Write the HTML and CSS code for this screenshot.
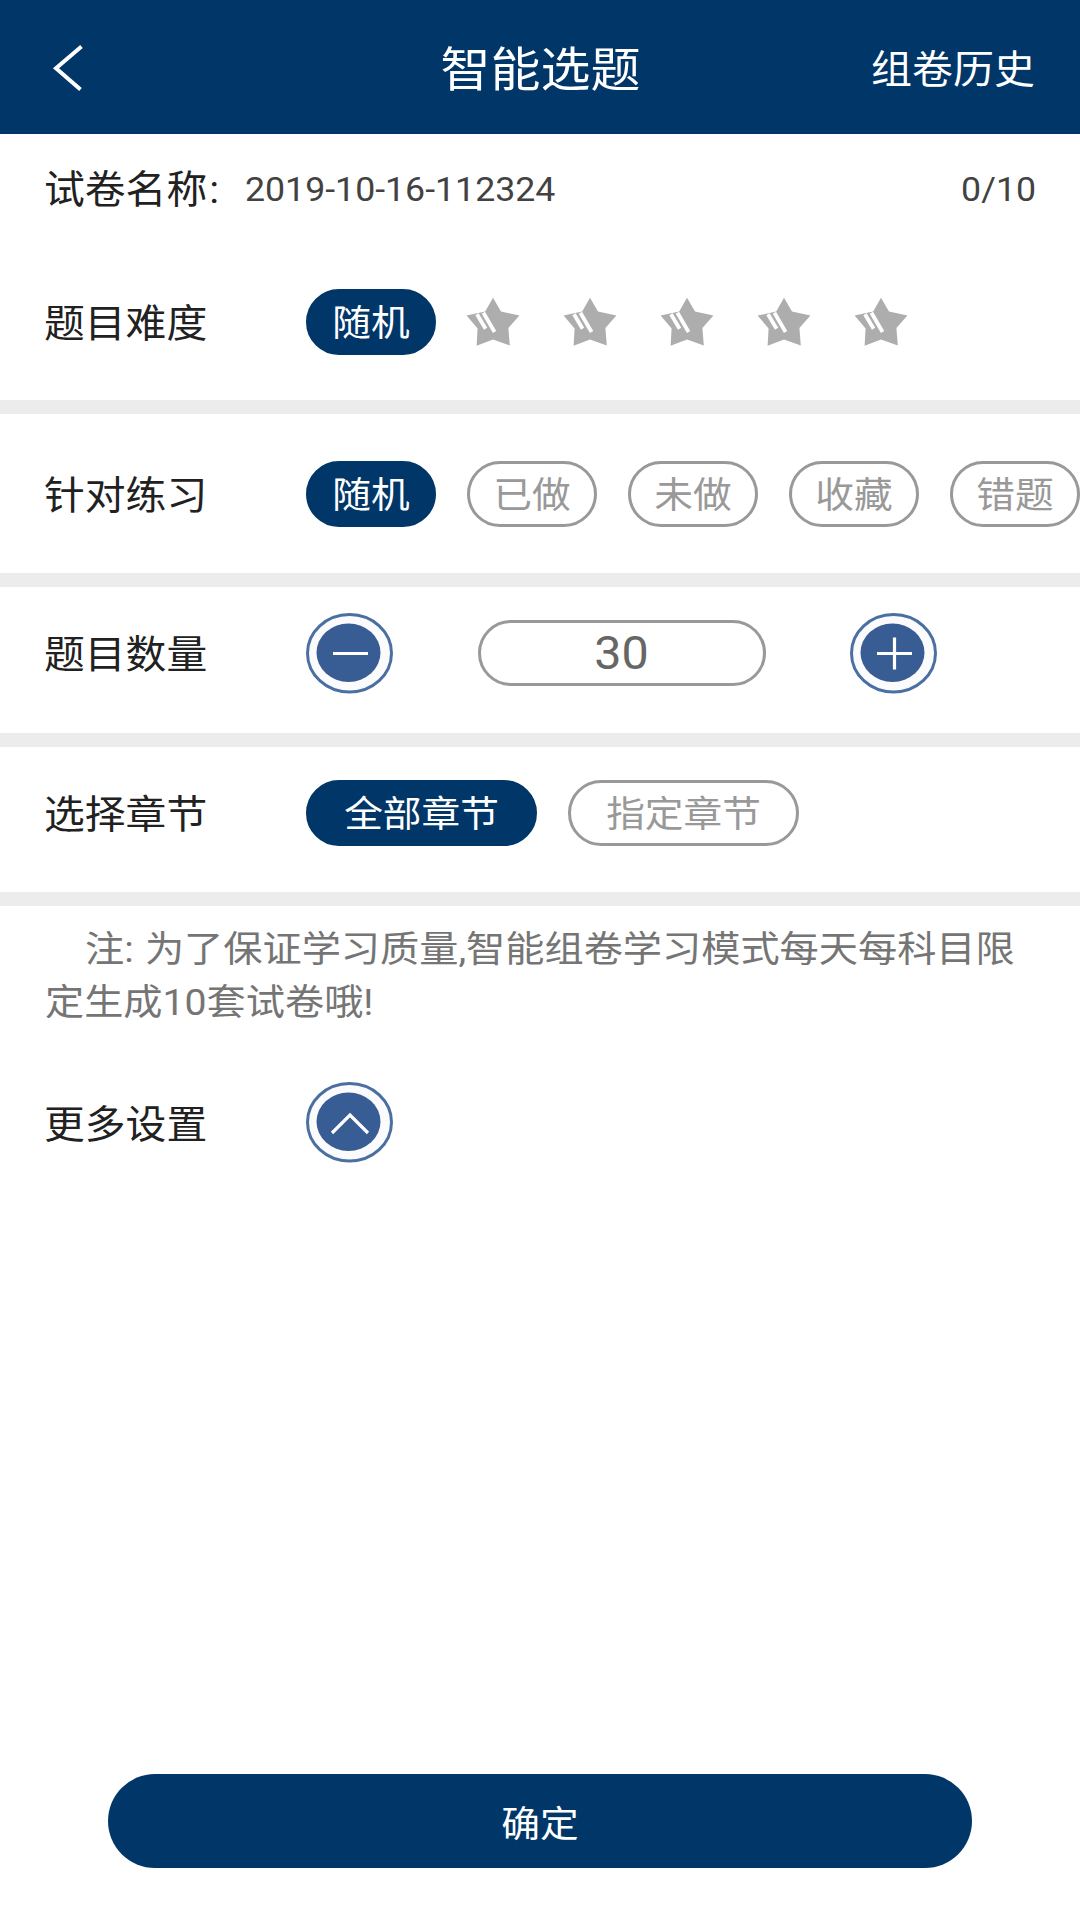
FILE: index.html
```html
<!DOCTYPE html>
<html lang="zh-CN">
<head>
<meta charset="utf-8">
<title>智能选题</title>
<link rel="stylesheet" href="styles.css">
</head>
<body>
<svg class="defs" width="0" height="0" aria-hidden="true">
  <symbol id="star" viewBox="0 0 54 50">
    <path fill="#adadad" d="M27 .8 35 14.6 53.4 18.6 42.4 31 43.8 48.6 27 42.4 10.6 48.8 11.6 31.4.6 18.6 19.2 14.6Z"/>
    <path fill="none" stroke="#fff" stroke-width="3.8" d="M11 17.2 19.6 31.8M17.4 15.8 28.6 35"/>
  </symbol>
  <symbol id="ring" viewBox="0 0 87 81">
    <ellipse cx="43.5" cy="40.2" rx="42" ry="38.7" fill="#fbfbfe" stroke="#4a6fa1" stroke-width="3"/>
    <ellipse cx="42.5" cy="39.7" rx="32" ry="29.2" fill="#385d94" stroke="none"/>
  </symbol>
</svg>
<div class="screen">
  <header class="bar">
    <svg class="back" viewBox="0 0 40 50"><path d="M35.500 3.500 10 25.200 34.500 46.500"/></svg>
    <h1 class="title text">智能选题</h1>
    <a class="history text">组卷历史</a>
  </header>
  <main class="form">
    <div class="row name">
      <span class="label text">试卷名称<span class="colon">:</span></span>
      <span class="value text">2019-10-16-112324</span>
      <span class="count text">0/10</span>
    </div>
    <div class="row level">
      <span class="label text">题目难度</span>
      <span class="chip on"><span class="text">随机</span></span>
      <div class="stars">
        <svg><use href="#star"/></svg>
        <svg><use href="#star"/></svg>
        <svg><use href="#star"/></svg>
        <svg><use href="#star"/></svg>
        <svg><use href="#star"/></svg>
      </div>
    </div>
    <div class="row practice">
      <span class="label text">针对练习</span>
      <div class="chips">
        <span class="chip on"><span class="text">随机</span></span>
        <span class="chip"><span class="text">已做</span></span>
        <span class="chip"><span class="text">未做</span></span>
        <span class="chip"><span class="text">收藏</span></span>
        <span class="chip"><span class="text">错题</span></span>
      </div>
    </div>
    <div class="row amount">
      <span class="label text">题目数量</span>
      <div class="stepper">
        <svg class="round" viewBox="0 0 87 81"><use href="#ring"/><path d="M27 40.500H62"/></svg>
        <span class="number"><span class="digits text">30</span></span>
        <svg class="round" viewBox="0 0 87 81"><use href="#ring"/><path d="M27 40.500H62M44.500 24.500V56.500"/></svg>
      </div>
    </div>
    <div class="row chapter">
      <span class="label text">选择章节</span>
      <div class="chips">
        <span class="chip wide on"><span class="text">全部章节</span></span>
        <span class="chip wide"><span class="text">指定章节</span></span>
      </div>
    </div>
    <p class="note"><span class="text">注: 为了保证学习质量,智能组卷学习模式每天每科目限</span><span class="text">定生成10套试卷哦!</span></p>
    <div class="row more">
      <span class="label text">更多设置</span>
      <svg class="round" viewBox="0 0 87 81"><use href="#ring"/><path d="M26 51 44 33 62 51"/></svg>
    </div>
  </main>
  <footer class="foot"><button class="submit"><span class="text">确定</span></button></footer>
</div>
</body>
</html>
```
FILE: styles.css
```css
* { box-sizing: border-box; }

body {
  margin: 0;
  background: #fff;
  color: #212121;
  font-family: Roboto, "Noto Sans CJK SC", sans-serif;
}

.defs { display: block; }

.screen {
  display: flex;
  flex-direction: column;
  width: 1080px;
  height: 1920px;
  overflow: hidden;
}

/* slightly extended letterforms */
.text {
  display: block;
  transform: translateY(2px) scaleY(.94);
}

.bar {
  display: grid;
  grid-template-columns: 1fr auto 1fr;
  align-items: center;
  height: 134px;
  padding: 2px 45px 0 46px;
  background: #003668;
  color: #fff;
}

.back {
  width: 40px;
  height: 50px;
  fill: none;
  stroke: #fff;
  stroke-width: 4;
}

.title {
  margin: 0;
  font-size: 50px;
  font-weight: 400;
  line-height: 60px;
}

.history {
  justify-self: end;
  font-size: 41px;
  line-height: 60px;
}

.form { flex: 1; }

.row {
  display: flex;
  align-items: center;
}

.label {
  width: 262px;
  margin-left: 44px;
  flex: none;
  font-size: 40.800px;
  line-height: 60px;
  white-space: nowrap;
}

.name { height: 110px; padding-bottom: 3px; }
.name .label { width: 201px; }
.colon { margin-left: 2px; }

.value, .count {
  color: #424242;
  font-size: 35.700px;
}

.count { margin-left: auto; margin-right: 44px; }

.level {
  height: 170px;
  padding-bottom: 1px;
  border-bottom: 14px solid #ececec;
}

.stars {
  display: flex;
  gap: 43px;
  margin-left: 30px;
}

.stars svg { width: 54px; height: 50px; }

.practice {
  height: 173px;
  border-bottom: 14px solid #ececec;
}

.chips { display: flex; gap: 31px; }

.chip {
  display: flex;
  align-items: center;
  justify-content: center;
  width: 130px;
  height: 66px;
  flex: none;
  border: 3px solid #999;
  border-radius: 33px;
  color: #999;
  font-size: 38.700px;
  line-height: 60px;
}

.chip.wide { width: 231px; }

.chip.on {
  border-color: #003668;
  background: #003668;
  color: #fff;
}

.amount {
  height: 160px;
  padding-bottom: 14px;
  border-bottom: 14px solid #ececec;
}

.stepper { display: flex; align-items: center; gap: 84.500px; }

.round {
  width: 87px;
  height: 81px;
  flex: none;
  fill: none;
  stroke: #fff;
  stroke-width: 3.200;
}

.number {
  display: flex;
  align-items: center;
  justify-content: center;
  width: 288px;
  height: 66px;
  border: 3px solid #999;
  border-radius: 33px;
  color: #666;
  font-size: 48.500px;
}

.digits { margin-top: -3px; }

.chapter {
  height: 159px;
  padding-bottom: 14px;
  border-bottom: 14px solid #ececec;
}

.note {
  margin: 0;
  padding: 16px 45px 0;
  color: #757575;
  font-size: 39.200px;
  line-height: 53px;
  white-space: nowrap;
  word-spacing: 1.500px;
}

.note .text:first-child { text-indent: 40px; }

.more { height: 81px; margin-top: 54px; }

.foot {
  display: flex;
  justify-content: center;
  padding-bottom: 52px;
}

.submit {
  width: 864px;
  height: 94px;
  padding: 0 0 4px;
  border: 0;
  border-radius: 47px;
  background: #003668;
  color: #fff;
  font: inherit;
  font-size: 38.700px;
}
```
